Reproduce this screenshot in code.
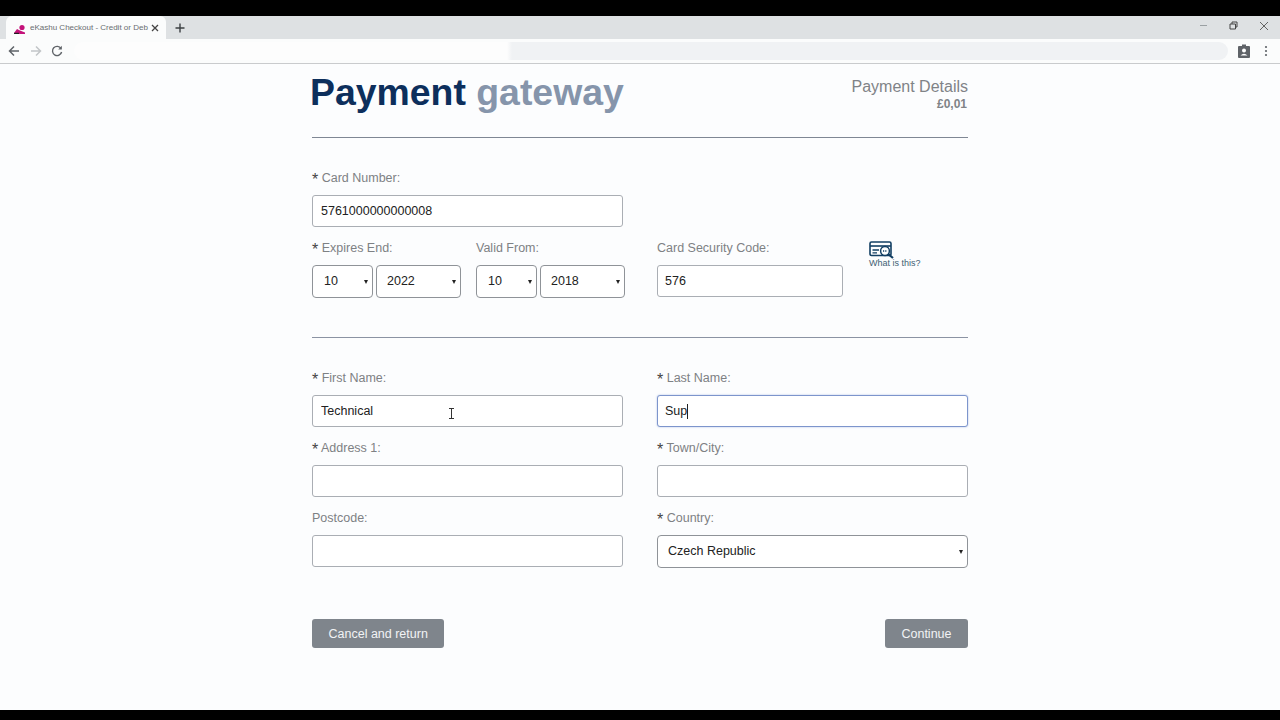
<script lang="ts">
	const months = ['10'];
</script>

<div class="screen">
	<div class="bar-black"></div>
	<div class="tabstrip">
		<div class="tab">
			<svg class="favicon" width="12" height="10" viewBox="0 0 12 10">
				<path d="M0 9 L3 5 L6 6.5 L11 8.5 L11 10 L0 10Z" fill="#c4127a" />
				<circle cx="8" cy="3.5" r="2.6" fill="#c4127a" />
				<path d="M0 9.4 H5" stroke="#222" stroke-width="1.2" />
			</svg>
			<span class="tab-title">eKashu Checkout - Credit or Deb</span>
			<svg class="tab-close" width="8" height="8" viewBox="0 0 8 8">
				<path d="M1 1 L7 7 M7 1 L1 7" stroke="#444" stroke-width="1.3" />
			</svg>
		</div>
		<svg class="new-tab" width="10" height="10" viewBox="0 0 10 10">
			<path d="M5 0.5 V9.5 M0.5 5 H9.5" stroke="#3c4043" stroke-width="1.4" />
		</svg>
		<div class="window-controls">
			<svg width="9" height="9" viewBox="0 0 9 9"><path d="M1 4.5 H8" stroke="#9aa0a3" stroke-width="1" /></svg>
			<svg width="9" height="9" viewBox="0 0 9 9">
				<path d="M1 3 H6.5 V8 H1Z M3 3 V1 H8 V6 H6.5" fill="none" stroke="#444" stroke-width="1" />
			</svg>
			<svg width="10" height="10" viewBox="0 0 10 10">
				<path d="M1 1 L9 9 M9 1 L1 9" stroke="#555" stroke-width="0.9" />
			</svg>
		</div>
	</div>
	<div class="toolbar">
		<svg class="nav" width="12" height="12" viewBox="0 0 12 12">
			<path d="M11 6 H2 M6 1.5 L1.5 6 L6 10.5" fill="none" stroke="#5f6368" stroke-width="1.5" />
		</svg>
		<svg class="nav" width="12" height="12" viewBox="0 0 12 12">
			<path d="M1 6 H10 M6 1.5 L10.5 6 L6 10.5" fill="none" stroke="#c2c5c7" stroke-width="1.5" />
		</svg>
		<svg class="nav reload" width="12" height="12" viewBox="0 0 12 12">
			<path d="M10 3.5 A4.6 4.6 0 1 0 10.6 7" fill="none" stroke="#5f6368" stroke-width="1.4" />
			<path d="M10.8 0.8 V4.4 H7.2Z" fill="#5f6368" />
		</svg>
		<div class="omnibox"></div>
		<svg class="profile" width="12" height="14" viewBox="0 0 12 14">
			<path d="M1 2 H4 V0.5 H8 V2 H11 Q12 2 12 3 V13 Q12 14 11 14 H1 Q0 14 0 13 V3 Q0 2 1 2Z" fill="#5f6368" />
			<circle cx="6" cy="6.5" r="2" fill="#fff" />
			<path d="M2.5 11.5 Q6 7.8 9.5 11.5Z" fill="#fff" />
		</svg>
		<svg class="menu" width="4" height="12" viewBox="0 0 4 12">
			<circle cx="2" cy="2" r="1.1" fill="#5f6368" />
			<circle cx="2" cy="6" r="1.1" fill="#5f6368" />
			<circle cx="2" cy="10" r="1.1" fill="#5f6368" />
		</svg>
	</div>

	<main class="page">
		<div class="content">
			<header class="head">
				<h1><span class="pay">Payment</span> <span class="gate">gateway</span></h1>
				<div class="details">
					<div class="details-title">Payment Details</div>
					<div class="details-amount">£0,01</div>
				</div>
			</header>

			<section class="card-section">
				<div class="row">
					<div class="group col">
						<div class="label"><b>*</b> Card Number:</div>
						<input class="input" value="5761000000000008" />
					</div>
				</div>
				<div class="row">
					<div class="group col dates">
						<div class="date-block first">
							<div class="label"><b>*</b> Expires End:</div>
							<div class="selects">
								<div class="select month">{months[0]}</div>
								<div class="select year">2022</div>
							</div>
						</div>
						<div class="date-block">
							<div class="label">Valid From:</div>
							<div class="selects">
								<div class="select month">10</div>
								<div class="select year">2018</div>
							</div>
						</div>
					</div>
					<div class="group cvv right">
						<div class="label">Card Security Code:</div>
						<input class="input" value="576" />
					</div>
					<div class="whatis">
						<svg width="26" height="18" viewBox="0 0 26 18">
							<rect x="1" y="1" width="21" height="13.5" rx="1.5" fill="none" stroke="#123f63" stroke-width="1.6" />
							<path d="M1 5 H22" stroke="#123f63" stroke-width="1.6" />
							<path d="M3.5 9 H10 M3.5 11.8 H8" stroke="#123f63" stroke-width="1.3" />
							<circle cx="16" cy="10" r="4.4" fill="#fff" stroke="#123f63" stroke-width="1.5" />
							<path d="M14 10 H18" stroke="#123f63" stroke-width="1.3" stroke-dasharray="1 0.8" />
							<path d="M19.3 13.2 L24 17" stroke="#123f63" stroke-width="2.2" />
						</svg>
						<span>What is this?</span>
					</div>
				</div>
			</section>

			<section class="address-section">
				<div class="row">
					<div class="group col">
						<div class="label"><b>*</b> First Name:</div>
						<input class="input" value="Technical" />
						<svg class="ibeam" width="7" height="11" viewBox="0 0 7 11">
							<path d="M1 0.5 H6 M1 10.5 H6 M3.5 0.5 V10.5" fill="none" stroke="#333" stroke-width="1" />
						</svg>
					</div>
					<div class="group col right">
						<div class="label"><b>*</b> Last Name:</div>
						<div class="input focused">Sup<span class="caret"></span></div>
					</div>
				</div>
				<div class="row">
					<div class="group col">
						<div class="label"><b>*</b> Address 1:</div>
						<input class="input" />
					</div>
					<div class="group col right">
						<div class="label"><b>*</b> Town/City:</div>
						<input class="input" />
					</div>
				</div>
				<div class="row">
					<div class="group col">
						<div class="label">Postcode:</div>
						<input class="input" />
					</div>
					<div class="group col right">
						<div class="label"><b>*</b> Country:</div>
						<div class="select country">Czech Republic</div>
					</div>
				</div>
			</section>

			<div class="actions">
				<button class="btn">Cancel and return</button>
				<button class="btn">Continue</button>
			</div>
		</div>
	</main>
	<div class="bar-black bottom"></div>
</div>

<style>
	:global(body) {
		margin: 0;
		background: #000;
	}

	.screen {
		width: 1280px;
		height: 720px;
		display: flex;
		flex-direction: column;
		overflow: hidden;
		font-family: 'Liberation Sans', Arial, sans-serif;
	}

	.bar-black {
		height: 16px;
		background: #000;
		flex-shrink: 0;
	}

	.bar-black.bottom {
		height: 10px;
	}

	.tabstrip {
		height: 23px;
		background: #dee1e3;
		display: flex;
		align-items: center;
		flex-shrink: 0;
	}

	.tab {
		margin-left: 6px;
		width: 160px;
		height: 23px;
		box-sizing: border-box;
		background: #fbfcfc;
		border-radius: 6px 6px 0 0;
		display: flex;
		align-items: center;
		padding-left: 8px;
	}

	.favicon {
		flex-shrink: 0;
		margin-top: 3px;
	}

	.tab-title {
		margin-left: 4px;
		width: 118px;
		white-space: nowrap;
		font-size: 8px;
		color: #6a6d70;
	}

	.tab-close {
		margin-left: 3px;
	}

	.new-tab {
		margin-left: 9px;
	}

	.window-controls {
		margin-left: auto;
		margin-right: 11px;
		margin-top: -4px;
		display: flex;
		align-items: center;
		gap: 21px;
	}

	.toolbar {
		height: 24px;
		background: #fbfcfc;
		border-bottom: 1px solid #c9cbcd;
		display: flex;
		align-items: center;
		flex-shrink: 0;
		padding-left: 8px;
		gap: 10px;
	}

	.nav {
		flex-shrink: 0;
	}

	.reload {
		margin-left: -1px;
	}

	.omnibox {
		margin-left: 1px;
		width: 1154px;
		height: 18px;
		flex-shrink: 0;
		box-sizing: border-box;
		border-radius: 9px;
		background: linear-gradient(to right, #fdfdfd 0 433px, #f0f2f4 438px);
	}

	.profile {
		flex-shrink: 0;
	}

	.menu {
		margin-left: 4px;
		flex-shrink: 0;
	}

	.page {
		flex: 1;
		background: #fcfdfe;
		display: flex;
		justify-content: center;
		min-height: 0;
	}

	.content {
		width: 656px;
		display: flex;
		flex-direction: column;
	}

	.head {
		height: 74px;
		box-sizing: border-box;
		border-bottom: 1px solid #7f8794;
		display: flex;
		justify-content: space-between;
	}

	h1 {
		margin: 6px 0 0 -2px;
		font-size: 37.4px;
		line-height: 44px;
		font-weight: 700;
		white-space: nowrap;
	}

	.pay {
		color: #0d2f5c;
	}

	.gate {
		color: #8695ab;
	}

	.details {
		text-align: right;
		margin-top: 14px;
		color: #808387;
	}

	.details-title {
		font-size: 16px;
		line-height: 18px;
	}

	.details-amount {
		margin-right: 1px;
		font-size: 12px;
		line-height: 16px;
		font-weight: 700;
	}

	.card-section {
		padding-top: 29px;
		height: 200px;
		box-sizing: border-box;
		border-bottom: 1px solid #8b93a3;
	}

	.address-section {
		padding-top: 29px;
	}

	.row {
		display: flex;
		gap: 34px;
		height: 70px;
	}

	.group {
		position: relative;
		display: flex;
		flex-direction: column;
	}

	.col {
		width: 311px;
	}

	.dates {
		flex-direction: row;
		gap: 15px;
	}

	.date-block.first {
		width: 149px;
	}

	.selects {
		display: flex;
		gap: 3px;
	}

	.label {
		height: 21px;
		margin-bottom: 7px;
		font-size: 12.5px;
		line-height: 22px;
		color: #7e8184;
		white-space: nowrap;
	}

	.label b {
		font-weight: 400;
		font-size: 16px;
		line-height: 0;
		vertical-align: -3px;
		color: #444;
	}

	.input,
	.select {
		box-sizing: border-box;
		height: 32px;
		width: 100%;
		margin: 0;
		padding: 0 8px;
		border: 1px solid #aaaeb4;
		border-radius: 3px;
		background: #fff;
		font: 12.5px/30px 'Liberation Sans', Arial, sans-serif;
		color: #222;
		outline: none;
	}

	.right .input {
		padding-left: 7px;
	}

	.input.focused {
		border-color: #7d95cc;
		box-shadow: 0 0 2px #a9bbe2;
		display: flex;
		align-items: center;
	}

	.caret {
		width: 1px;
		height: 15px;
		background: #222;
	}

	.select {
		position: relative;
		height: 33px;
		padding-left: 11px;
		border-color: #8f9398;
		border-radius: 4px;
		line-height: 31px;
	}

	.select::after {
		content: '';
		position: absolute;
		right: 4px;
		top: 14px;
		border-left: 2px solid transparent;
		border-right: 2px solid transparent;
		border-top: 4px solid #222;
	}

	.select.month {
		width: 61px;
	}

	.select.year {
		width: 85px;
		padding-left: 10px;
	}

	.select.country {
		width: 100%;
		padding-left: 10px;
	}

	.cvv {
		width: 186px;
	}

	.ibeam {
		position: absolute;
		left: 136px;
		top: 41px;
	}

	.whatis {
		margin: 4px 0 0 -8px;
		display: flex;
		flex-direction: column;
		align-items: flex-start;
		height: 40px;
	}

	.whatis span {
		margin-top: -1px;
		font-size: 9px;
		line-height: 10px;
		color: #3f5f74;
	}

	.actions {
		margin-top: 42px;
		display: flex;
		justify-content: space-between;
		align-items: flex-start;
	}

	.btn {
		height: 29px;
		padding: 0 16.5px;
		border: 0;
		border-radius: 3px;
		background: #7f858c;
		color: #f2f3f5;
		font: 12.5px 'Liberation Sans', Arial, sans-serif;
	}
</style>
